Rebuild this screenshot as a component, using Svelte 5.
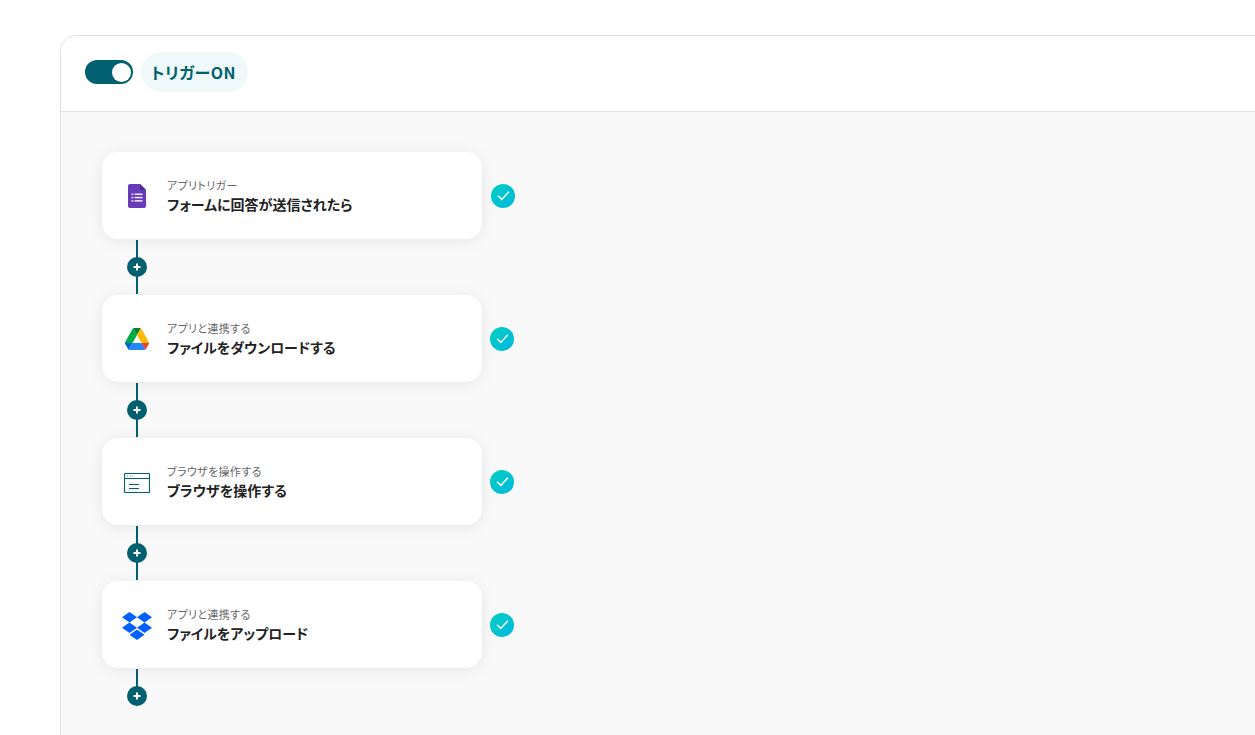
<script>
  const steps = [
    { kind: 'forms', label: 'アプリトリガー', title: 'フォームに回答が送信されたら', shift: true },
    { kind: 'drive', label: 'アプリと連携する', title: 'ファイルをダウンロードする' },
    { kind: 'browser', label: 'ブラウザを操作する', title: 'ブラウザを操作する' },
    { kind: 'dropbox', label: 'アプリと連携する', title: 'ファイルをアップロード', last: true }
  ];
</script>

<div class="page">
  <section class="panel">
    <header class="head">
      <span class="toggle"><span class="knob"></span></span>
      <span class="pill">トリガーON</span>
    </header>
    <div class="body">
      {#each steps as s}
        <div class="row">
          <div class="card">
            <div class="icon">
              {#if s.kind === 'forms'}
                <svg width="18" height="24" viewBox="0 0 18 24">
                  <path d="M2 0H12L18 6V22a2 2 0 0 1-2 2H2a2 2 0 0 1-2-2V2a2 2 0 0 1 2-2Z" fill="#673ab7"/>
                  <path d="M12 0L18 6H13.500A1.500 1.500 0 0 1 12 4.500Z" fill="#4a2a8f"/>
                  <g fill="#f1ecfa">
                    <rect x="3.500" y="9.500" width="1.800" height="1.500"/><rect x="6.500" y="9.500" width="8" height="1.500"/>
                    <rect x="3.500" y="12.800" width="1.800" height="1.500"/><rect x="6.500" y="12.800" width="8" height="1.500"/>
                    <rect x="3.500" y="16.100" width="1.800" height="1.500"/><rect x="6.500" y="16.100" width="8" height="1.500"/>
                  </g>
                </svg>
              {:else if s.kind === 'drive'}
                <svg width="24" height="22" viewBox="0 0 87.300 78" preserveAspectRatio="none">
                  <path d="m6.600 66.850 3.850 6.650c.8 1.400 1.950 2.500 3.300 3.300l13.750-23.800h-27.500c0 1.550.4 3.100 1.200 4.500z" fill="#0066da"/>
                  <path d="m43.650 25-13.750-23.800c-1.350.8-2.500 1.900-3.300 3.300l-25.400 44a9.060 9.060 0 0 0-1.200 4.500h27.500z" fill="#00ac47"/>
                  <path d="m73.550 76.800c1.350-.8 2.500-1.900 3.300-3.300l1.600-2.750 7.650-13.250c.8-1.400 1.200-2.950 1.200-4.500h-27.500l5.850 11.500z" fill="#ea4335"/>
                  <path d="m43.650 25 13.750-23.800c-1.350-.8-2.900-1.200-4.500-1.200h-18.500c-1.600 0-3.150.45-4.500 1.200z" fill="#00832d"/>
                  <path d="m59.800 53h-32.300l-13.750 23.800c1.350.8 2.900 1.200 4.500 1.200h50.800c1.600 0 3.150-.45 4.500-1.200z" fill="#2684fc"/>
                  <path d="m73.400 26.500-12.700-22c-.8-1.400-1.950-2.500-3.300-3.300l-13.750 23.800 16.150 28h27.450c0-1.550-.4-3.100-1.200-4.500z" fill="#ffba00"/>
                </svg>
              {:else if s.kind === 'browser'}
                <svg class="low" width="26" height="20" viewBox="0 0 26 20" fill="none">
                  <rect x=".5" y=".5" width="25" height="19" rx="1" stroke="#00606f" stroke-width="1.200"/>
                  <path d="M.5 5.500H25.500" stroke="#00606f" stroke-width="1"/>
                  <path d="M5 11.500H15M5 15.500H15" stroke="#00606f" stroke-width="1.200"/>
                  <path d="M3 3H4.200M5.600 3H6.800M8.200 3H9.400" stroke="#5f97a2" stroke-width="1.200"/>
                </svg>
              {:else}
                <svg class="low" width="30" height="28" viewBox="0 0 30 26.100" preserveAspectRatio="none">
                  <path d="M7.500 0 0 4.900l7.500 4.900L15 4.900ZM22.500 0 15 4.900l7.500 4.900L30 4.900ZM0 14.700l7.500 4.900L15 14.700 7.500 9.800ZM22.500 9.800 15 14.700l7.500 4.900 7.500-4.900ZM7.500 21.200l7.500 4.900 7.500-4.900L15 16.300Z" fill="#0061ff"/>
                </svg>
              {/if}
            </div>
            <div class="text">
              <div class="label">{s.label}</div>
              <div class="title">{s.title}</div>
            </div>
          </div>
          <span class="check" class:shift={s.shift}>
            <svg width="13" height="11" viewBox="0 0 12 10" fill="none">
              <path d="M1 5.200 4.400 8.600 11 1.500" stroke="#fff" stroke-width="1.400"/>
            </svg>
          </span>
        </div>
        <div class="link" class:last={s.last}>
          <span class="plus">
            <svg width="8" height="8" viewBox="0 0 8 8"><path d="M4 .5v7M.5 4h7" stroke="#fff" stroke-width="2"/></svg>
          </span>
        </div>
      {/each}
    </div>
  </section>
</div>

<style>
  :global(body) {
    margin: 0;
    background: #fff;
  }
  .page {
    height: 735px;
    overflow: hidden;
    padding: 35px 0 0 60px;
    box-sizing: border-box;
    font-family: "Noto Sans CJK JP", "Noto Sans", sans-serif;
    font-feature-settings: "palt";
  }
  .panel {
    width: 1300px;
    height: 800px;
    box-sizing: border-box;
    border: 1px solid #e0e0e0;
    border-radius: 16px;
    overflow: hidden;
  }
  .head {
    height: 76px;
    box-sizing: border-box;
    border-bottom: 1px solid #e0e0e0;
    padding: 0 0 3px 24px;
    display: flex;
    align-items: center;
    gap: 8px;
    background: #fff;
  }
  .toggle {
    width: 48px;
    height: 24px;
    border-radius: 12px;
    background: #00606f;
    display: flex;
    align-items: center;
    justify-content: flex-end;
    padding-right: 2px;
    box-sizing: border-box;
  }
  .knob {
    width: 19px;
    height: 19px;
    border-radius: 50%;
    background: #fff;
  }
  .pill {
    height: 40px;
    line-height: 40px;
    width: 107px;
    box-sizing: border-box;
    padding-left: 10px;
    border-radius: 20px;
    background: #eff9f9;
    color: #00606f;
    font-size: 16px;
    font-weight: 700;
    letter-spacing: .5px;
    white-space: nowrap;
  }
  .body {
    background: #f9f9f9;
    padding: 40px 0 0 41px;
    height: 700px;
  }
  .row {
    display: flex;
    align-items: center;
    gap: 8px;
  }
  .card {
    width: 380px;
    height: 87px;
    box-sizing: border-box;
    background: #fff;
    border-radius: 16px;
    box-shadow: 0 2px 16px rgba(0, 0, 0, .08);
    display: flex;
    align-items: center;
  }
  .icon {
    width: 70px;
    margin-right: -5px;
    display: flex;
    justify-content: center;
  }
  .icon svg {
    display: block;
  }
  .icon svg.low {
    transform: translateY(1px);
  }
  .text {
    padding-top: 1px;
  }
  .label {
    font-size: 11px;
    line-height: 14px;
    letter-spacing: .35px;
    color: #666;
  }
  .title {
    margin-top: 2px;
    font-size: 14px;
    line-height: 20px;
    font-weight: 700;
    color: #222;
  }
  .check {
    width: 24px;
    height: 24px;
    border-radius: 50%;
    background: linear-gradient(135deg, #00cfc0, #00b8e0);
    display: flex;
    align-items: center;
    justify-content: center;
  }
  .check.shift {
    margin-left: 1px;
  }
  .link {
    height: 56px;
    width: 70px;
    display: flex;
    align-items: center;
    justify-content: center;
    background: linear-gradient(#00606f, #00606f) center / 2px 54px no-repeat;
  }
  .link.last {
    background-size: 2px 27px;
    background-position: center 1px;
  }
  .plus {
    width: 20px;
    height: 20px;
    border-radius: 50%;
    background: #00606f;
    display: flex;
    align-items: center;
    justify-content: center;
  }
</style>
